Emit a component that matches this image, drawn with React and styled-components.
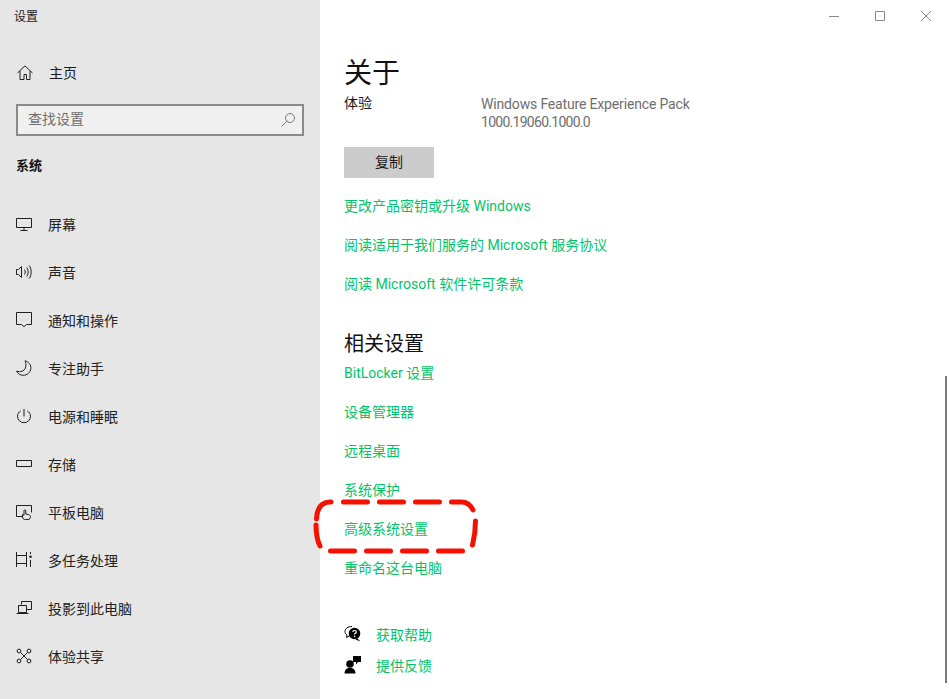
import React from "react";
import styled, { createGlobalStyle } from "styled-components";

const Global = createGlobalStyle`
  html, body { margin: 0; padding: 0; height: 100%; overflow: hidden; background: #fff; }
  body { font-family: Roboto, "Noto Sans CJK SC", sans-serif; font-size: 14px; color: #1a1a1a; }
  * { box-sizing: border-box; }
`;

const Page = styled.div`
  position: relative;
  display: flex;
  width: 949px;
  height: 699px;
  overflow: hidden;
  background: #fff;
`;
const Sidebar = styled.aside`
  width: 320px;
  flex: none;
  background: #e6e6e6;
  display: flex;
  flex-direction: column;
`;
const AppTitle = styled.div`
  height: 34px;
  padding-left: 14px;
  font-size: 12px;
  line-height: 34px;
  color: #1a1a1a;
`;
const HomeRow = styled.div`
  height: 48px;
  margin-top: 15px;
  display: flex;
  align-items: center;
  gap: 16px;
  padding-left: 17px;
  line-height: 20px;
`;
const SearchBox = styled.div`
  height: 32px;
  margin: 7px 16px 0;
  border: 2px solid #8a8a8a;
  background: #f0f0f0;
  display: flex;
  align-items: center;
  justify-content: space-between;
  padding: 0 6px 0 10px;
  color: #6f6f6f;
  line-height: 24px;
`;
const SearchLabel = styled.span`
  display: block;
  height: 24px;
  line-height: 22px;
`;
const GroupTitle = styled.div`
  height: 20px;
  margin: 20px 0 24px 16px;
  font-size: 13px;
  line-height: 20px;
  font-weight: 700;
  color: #111;
`;
const NavList = styled.nav`
  display: flex;
  flex-direction: column;
`;
const NavItem = styled.div`
  height: 48px;
  display: flex;
  align-items: center;
  gap: 16px;
  padding-left: 16px;
  color: #222;
`;
const Main = styled.main`
  flex: 1;
  display: flex;
  flex-direction: column;
  padding-left: 24px;
`;
const WindowBar = styled.div`
  height: 47px;
  flex: none;
  display: flex;
  justify-content: flex-end;
`;
const WinBtn = styled.div`
  width: 46px;
  height: 32px;
  display: flex;
  align-items: center;
  justify-content: center;
`;
const Heading = styled.h1`
  margin: 0;
  height: 50px;
  font-size: 28px;
  font-weight: 400;
  line-height: 54px;
  color: #111;
`;
const InfoRow = styled.div`
  display: flex;
  height: 50px;
`;
const InfoLabel = styled.div`
  width: 137px;
  line-height: 18px;
  margin-top: -3px;
  color: #1a1a1a;
`;
const InfoValue = styled.div`
  line-height: 18px;
  color: #6e6e6e;
  margin-top: -2px;
`;
const InfoLine = styled.div`
  letter-spacing: ${(p) => p.$spacing};
  white-space: nowrap;
`;
const CopyButton = styled.button`
  display: block;
  width: 90px;
  height: 31px;
  border: 0;
  background: #cccccc;
  color: #1a1a1a;
  font: inherit;
  line-height: 28px;
  margin-bottom: 8px;
  padding: 0 0 1px;
`;
const LinkText = styled.a`
  display: block;
  height: 39px;
  line-height: 41px;
  color: #00c46a;
  white-space: nowrap;
`;
const SectionTitle = styled.h2`
  margin: 26px 0 0;
  height: 24px;
  font-size: 20px;
  font-weight: 400;
  line-height: 30px;
  color: #111;
`;
const HelpList = styled.div`
  display: flex;
  flex-direction: column;
  margin-top: 31px;
`;
const HelpRow = styled.div`
  height: 31px;
  display: flex;
  align-items: center;
  gap: 14px;
  color: #00c46a;
`;
const ScrollThumb = styled.div`
  position: absolute;
  left: 945px;
  top: 376px;
  width: 2px;
  height: 307px;
  background: #7a7a7a;
`;
const Annotation = styled.svg`
  position: absolute;
  left: 312px;
  top: 498px;
  pointer-events: none;
`;

const Ico = ({ children, w = 16, h = 16 }) => (
  <svg width={w} height={h} viewBox={`0 0 ${w} ${h}`} fill="none" stroke="#1f1f1f" strokeWidth="1" style={{ flex: "none", overflow: "visible" }}>
    {children}
  </svg>
);

const icons = {
  display: <Ico><path d="M.5 2.500h15v9H.5zM8 11.500v3M4.500 14.500h7" /></Ico>,
  sound: (
    <Ico>
      <path d="M.5 5.500v5h2l3 3V2.500l-3 3z" />
      <path d="M8.500 5.500c1 1.500 1 3.500 0 5M10.800 3.500c1.800 2.500 1.800 6.500 0 9M13.200 1.500c2.600 3.500 2.600 9.500 0 13" />
    </Ico>
  ),
  notify: <Ico><path d="M.5.500h15v12h-5L8 14.700l-2.500-2.200h-5z" /></Ico>,
  moon: <Ico><path d="M9 .8c4 1 6.300 4.200 5.800 8-.5 3.700-3.700 6.500-7.500 6.500-3 0-5.500-1.500-6.800-4.200 4 1.200 7.500.2 8.800-3C10.300 5.500 10.200 3 9 .8z" /></Ico>,
  power: <Ico><path d="M8 1v7.500M4.700 3C2.600 4.100 1.500 6 1.500 8.200a6.500 6.500 0 0 0 13 0c0-2.200-1.100-4.100-3.200-5.200" /></Ico>,
  storage: <Ico><path d="M.5 4.500h15v6H.5z" /></Ico>,
  tablet: (
    <Ico>
      <path d="M7 12.500H.5v-11h15v7" />
      <path d="M9.500 15.500c-2 0-3-1-3-2.500v-2.500l1.500.8V6.700c0-1.200 1.800-1.200 1.800 0v3.300l3 .7c1 .3 1.700.8 1.700 1.800 0 1.800-1 3-2.500 3z" fill="#e6e6e6" />
    </Ico>
  ),
  multi: (
    <Ico>
      <path d="M.5 0v15M10.500 0v15M.5 3.500h10M.5 11.500h10M14.500 0v2M14.500 8v7" />
      <circle cx="14.500" cy="4.700" r="1.300" fill="#1f1f1f" stroke="none" />
    </Ico>
  ),
  project: (
    <Ico>
      <path d="M5.500 4.500V1.500h10v8h-5" />
      <path d="M2.500 5.500h8v7h-8zM.5 13.500h12" />
    </Ico>
  ),
  share: (
    <Ico>
      <circle cx="3" cy="3" r="1.900" />
      <circle cx="13" cy="3" r="1.900" />
      <circle cx="3" cy="13" r="1.900" />
      <circle cx="13" cy="13" r="1.900" />
      <path d="M4.500 4.500l7 7M11.500 4.500l-7 7" />
    </Ico>
  ),
};

const navItems = [
  ["display", "屏幕"],
  ["sound", "声音"],
  ["notify", "通知和操作"],
  ["moon", "专注助手"],
  ["power", "电源和睡眠"],
  ["storage", "存储"],
  ["tablet", "平板电脑"],
  ["multi", "多任务处理"],
  ["project", "投影到此电脑"],
  ["share", "体验共享"],
];

const topLinks = ["更改产品密钥或升级 Windows", "阅读适用于我们服务的 Microsoft 服务协议", "阅读 Microsoft 软件许可条款"];
const relatedLinks = ["BitLocker 设置", "设备管理器", "远程桌面", "系统保护", "高级系统设置", "重命名这台电脑"];

export default function App() {
  return (
    <Page>
      <Global />
      <Sidebar>
        <AppTitle>设置</AppTitle>
        <HomeRow>
          <Ico>
            <path d="M.5 8L8 .8 15.500 8M3 6v8.500h4v-5h2.500v5H13V6" />
          </Ico>
          主页
        </HomeRow>
        <SearchBox>
          <SearchLabel>查找设置</SearchLabel>
          <svg width="16" height="16" viewBox="0 0 16 16" fill="none" stroke="#777" strokeWidth="1">
            <circle cx="10" cy="6" r="4.500" />
            <path d="M6.800 9.300L1.500 14.500" />
          </svg>
        </SearchBox>
        <GroupTitle>系统</GroupTitle>
        <NavList>
          {navItems.map(([icon, label]) => (
            <NavItem key={label}>
              {icons[icon]}
              {label}
            </NavItem>
          ))}
        </NavList>
      </Sidebar>
      <Main>
        <WindowBar>
          <WinBtn>
            <svg width="10" height="10" viewBox="0 0 10 10" stroke="#8a8a8a" fill="none"><path d="M0 5.500h10" /></svg>
          </WinBtn>
          <WinBtn>
            <svg width="10" height="10" viewBox="0 0 10 10" stroke="#8a8a8a" fill="none"><path d="M.5.500h9v9h-9z" /></svg>
          </WinBtn>
          <WinBtn>
            <svg width="10" height="10" viewBox="0 0 10 10" stroke="#8a8a8a" fill="none"><path d="M0 0l10 10M10 0L0 10" /></svg>
          </WinBtn>
        </WindowBar>
        <Heading>关于</Heading>
        <InfoRow>
          <InfoLabel>体验</InfoLabel>
          <InfoValue>
            <InfoLine $spacing="-0.16px">Windows Feature Experience Pack</InfoLine>
            <InfoLine $spacing="-0.72px">1000.19060.1000.0</InfoLine>
          </InfoValue>
        </InfoRow>
        <CopyButton>复制</CopyButton>
        {topLinks.map((t) => (
          <LinkText key={t}>{t}</LinkText>
        ))}
        <SectionTitle>相关设置</SectionTitle>
        {relatedLinks.map((t) => (
          <LinkText key={t}>{t}</LinkText>
        ))}
        <HelpList>
          <HelpRow>
            <svg width="18" height="18" viewBox="0 0 18 18" style={{ flex: "none" }}>
              <path d="M8 1.500C4 1.500 1 3.500 1 6.500c0 1.500.7 2.700 2 3.500l-.5 2.500 3-1.700" fill="none" stroke="#000" />
              <circle cx="10.500" cy="8.500" r="5.800" fill="#000" />
              <path d="M13 13l3.500 3.500-5-2z" fill="#000" />
              <path d="M8.800 7c0-2 3.500-2 3.500 0 0 1.300-1.800 1.300-1.800 2.600" fill="none" stroke="#fff" strokeWidth="1.200" />
              <circle cx="10.500" cy="11.300" r=".8" fill="#fff" />
            </svg>
            获取帮助
          </HelpRow>
          <HelpRow>
            <svg width="18" height="18" viewBox="0 0 18 18" style={{ flex: "none" }}>
              <path d="M9 0h8v6h-3l-2 2.500V6H9z" fill="#000" />
              <circle cx="6" cy="8" r="3.800" fill="#000" />
              <path d="M.5 17.500c0-3.500 2-5.500 5.500-5.500s5.500 2 5.500 5.500z" fill="#000" />
            </svg>
            提供反馈
          </HelpRow>
        </HelpList>
      </Main>
      <ScrollThumb />
      <Annotation width="170" height="58" viewBox="312 498 170 58" fill="none" stroke="#f51000" strokeWidth="5" strokeLinecap="round">
        <path d="M331 502h-1C321 502 317 509 316.500 519" />
        <path d="M316 525c0 8 1 15 4 21" />
        <path d="M343.500 502h24M379.500 502h24M415.500 502h24M451.500 502h10c5 0 9 3 11.500 8" />
        <path d="M475.500 521c0 8-1 16-3 24" />
        <path d="M330.500 551h24M366.500 551h24M402.500 551h24M438.500 551h24" />
      </Annotation>
    </Page>
  );
}
